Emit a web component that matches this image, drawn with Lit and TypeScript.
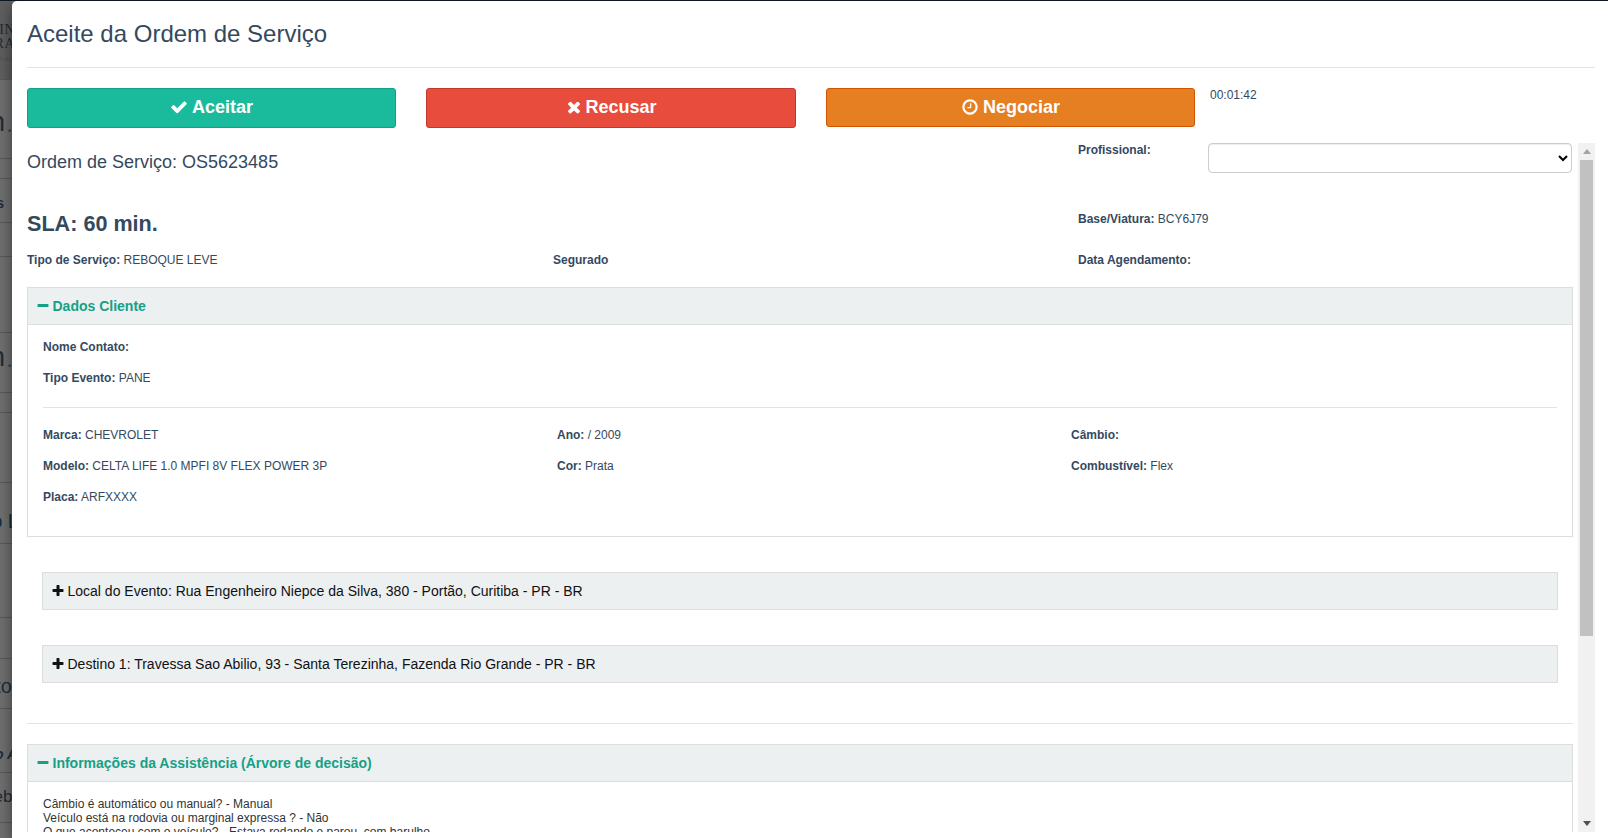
import { LitElement, html, css, svg } from "lit";
import { customElement } from "lit/decorators.js";

const ICONS: Record<string, string> = {
  check: "M1671 566q0 40-28 68l-724 724-136 136q-28 28-68 28t-68-28l-136-136-362-362q-28-28-28-68t28-68l136-136q28-28 68-28t68 28l294 295 656-657q28-28 68-28t68 28l136 136q28 28 28 68z",
  times: "M1490 1322q0 40-28 68l-136 136q-28 28-68 28t-68-28l-294-294-294 294q-28 28-68 28t-68-28l-136-136q-28-28-28-68t28-68l294-294-294-294q-28-28-28-68t28-68l136-136q28-28 68-28t68 28l294 294 294-294q28-28 68-28t68 28l136 136q28 28 28 68t-28 68l-294 294 294 294q28 28 28 68z",
  clock: "M1024 544v448q0 14-9 23t-23 9h-320q-14 0-23-9t-9-23v-64q0-14 9-23t23-9h224v-352q0-14 9-23t23-9h64q14 0 23 9t9 23zm416 352q0-148-73-273t-198-198-273-73-273 73-198 198-73 273 73 273 198 198 273 73 273-73 198-198 73-273zm224 0q0 209-103 385.5t-279.5 279.5-385.5 103-385.5-103-279.5-279.5-103-385.5 103-385.5 279.5-279.5 385.5-103 385.5 103 279.5 279.5 103 385.5z",
  plus: "M1600 736v192q0 40-28 68t-68 28h-416v416q0 40-28 68t-68 28h-192q-40 0-68-28t-28-68v-416h-416q-40 0-68-28t-28-68v-192q0-40 28-68t68-28h416v-416q0-40 28-68t68-28h192q40 0 68 28t28 68v416h416q40 0 68 28t28 68z",
  minus: "M1600 736v192q0 40-28 68t-68 28h-1216q-40 0-68-28t-28-68v-192q0-40 28-68t68-28h1216q40 0 68 28t28 68z",
};

const icon = (name: string, size: number) =>
  html`<svg class="ic" width=${size} height=${size} viewBox="0 0 1792 1792" fill="currentColor">${svg`<path d=${ICONS[name]}></path>`}</svg>`;

const LINES = [79, 158, 178, 222, 256, 332, 392, 412, 482, 543, 617, 658, 708, 772, 822];
/* Page text showing through behind the dialog; x is where the fragment's right edge falls. */
const FRAGS: { t: string; x: number; y: number; cls: string }[] = [
  { t: "LIN", x: 15, y: 23, cls: "serif" },
  { t: "TRA", x: 15, y: 37, cls: "serif" },
  { t: "TIAN", x: 14, y: 57, cls: "tiny" },
  { t: "n", x: 5, y: 109, cls: "big" },
  { t: ".", x: 13, y: 112, cls: "dot" },
  { t: "s", x: 4, y: 196, cls: "small" },
  { t: "n", x: 5, y: 344, cls: "big" },
  { t: ".", x: 13, y: 347, cls: "dot" },
  { t: "o L", x: 19, y: 511, cls: "mid" },
  { t: "to", x: 12, y: 676, cls: "mid" },
  { t: "o A", x: 17, y: 747, cls: "midb" },
  { t: "eb", x: 12.5, y: 788, cls: "web" },
];

@customElement("app-root")
export class AppRoot extends LitElement {
  static styles = css`
    :host {
      display: block;
      position: relative;
      width: 1608px;
      height: 838px;
      overflow: hidden;
      background: #707070;
      font-family: "Liberation Sans", Arial, sans-serif;
      font-size: 12px;
      color: #34495e;
    }
    .topstrip { position: absolute; inset: 0 0 auto 0; height: 1px; background: #101820; }
    .brandband { position: absolute; left: 0; top: 1px; width: 12px; height: 78px; background: #5f5f5f; }
    .bline { position: absolute; left: 0; width: 12px; height: 1px; background: #5a5a5a; }
    .frag { position: absolute; white-space: nowrap; color: #1f2d38; line-height: 1; }
    .serif { font-family: "Liberation Serif", serif; font-size: 14px; line-height: 13px; letter-spacing: 0.5px; color: #222a30; }
    .tiny { font-size: 5px; color: #4a4a4a; letter-spacing: 1px; }
    .big { font-size: 27px; }
    .dot { font-size: 24px; color: #3a4650; }
    .small { font-size: 14px; font-weight: 700; }
    .mid { font-size: 20px; }
    .web { font-size: 17px; }
    .midb { font-size: 14px; font-weight: 700; font-style: italic; }

    .modal {
      position: absolute;
      left: 12px; right: 0; top: 1px; bottom: 0;
      background: #fff;
      border-top-left-radius: 5px;
      box-shadow: 0 5px 15px rgba(0, 0, 0, 0.5);
      padding: 0 13px 0 15px;
      display: flex;
      flex-direction: column;
    }
    h1 {
      margin: 19px 0 0;
      font-size: 24px;
      font-weight: 400;
      line-height: 27px;
      color: #34495e;
    }
    .rule { height: 1px; background: #e2e2e2; border: 0; margin: 0; flex: none; }
    .rule.top { margin-top: 20px; }
    .actions { display: flex; align-items: flex-start; gap: 30px; margin: 20px 0 0 -1px; height: 55px; flex: none; }
    .btn {
      width: 370px;
      height: 40px;
      box-sizing: border-box;
      display: flex;
      align-items: center;
      justify-content: center;
      gap: 4px;
      border: 1px solid;
      border-radius: 3px;
      color: #fff;
      font: 700 18px "Liberation Sans", Arial, sans-serif;
      padding: 0 0 2px;
    }
    .ok { background: #1abb9c; border-color: #169f85; width: 369px; margin-left: 1px; }
    .no { background: #e74c3c; border-color: #c0392b; gap: 2px; }
    .neg { background: #e67e22; border-color: #d35400; width: 369px; height: 39px; padding-bottom: 1px; }
    .timer { margin-left: -15px; line-height: 14px; color: #34495e; }
    .scrollbox { flex: none; height: 689px; display: flex; }
    .viewport { flex: 1; min-width: 0; overflow: hidden; }
    .sbar { flex: none; width: 17px; background: #f1f1f1; display: flex; flex-direction: column; align-items: center; }
    .sbtn { flex: none; height: 17px; width: 17px; display: flex; align-items: center; justify-content: center; }
    .tri { width: 0; height: 0; border-left: 4.5px solid transparent; border-right: 4.5px solid transparent; }
    .tri.up { border-bottom: 5px solid #a3a3a3; }
    .tri.down { border-top: 5px solid #505050; }
    .thumb { flex: none; width: 13px; height: 476px; background: #c1c1c1; }
    .strack { flex: 1; }
    .content { width: 1546px; }
    .grid { display: grid; grid-template-columns: 526px 525px 1fr; width: 1551px; }
    .os { grid-column: 1 / 3; font-size: 18px; line-height: 20px; padding-top: 9px; }
    .prof { display: flex; align-items: flex-start; }
    .prof b { width: 130px; line-height: 14px; flex: none; }
    select {
      width: 364px;
      height: 30px;
      box-sizing: border-box;
      background: #fff;
      border: 1px solid #ccc;
      border-radius: 4px;
      box-shadow: inset 0 1px 1px rgba(0, 0, 0, 0.075);
      padding: 0;
      margin: 0;
    }
    .sla { grid-column: 1 / 3; font-size: 21.6px; font-weight: 700; line-height: 26px; margin-top: 38px; }
    .base { line-height: 14px; margin-top: 39px; }
    .info { height: 17px; line-height: 17px; margin-top: 15px; }
    .panel { border: 1px solid #dddddd; box-sizing: border-box; }
    .p1 { margin-top: 18px; height: 250px; }
    .p2 { margin-top: 20px; height: 347px; }
    .phead {
      height: 37px;
      box-sizing: border-box;
      background: #ecf0f1;
      border-bottom: 1px solid #dddddd;
      padding-left: 8px;
      display: flex;
      align-items: center;
      gap: 2.5px;
      color: #16a085;
      font-size: 14px;
      font-weight: 700;
    }
    .pbody { padding: 14px 15px 0; }
    .line { height: 17px; line-height: 17px; margin-bottom: 14px; white-space: nowrap; }
    .inrule { height: 1px; background: #e2e2e2; margin: 20px 0 19px; }
    .cols { display: grid; grid-template-columns: 514px 514px 1fr; }
    .bar {
      margin: 35px 15px 0;
      height: 38px;
      box-sizing: border-box;
      background: #ecf0f1;
      border: 1px solid #dddddd;
      padding-left: 8px;
      display: flex;
      align-items: center;
      gap: 2.5px;
      color: #111;
      font-size: 14px;
      white-space: nowrap;
    }
    .rule.mid2 { margin-top: 40px; }
    .text { padding: 15px 15px 0; line-height: 14px; color: #333; }
    .ic { flex: none; display: block; }
  `;

  render() {
    return html`
      <div class="topstrip"></div>
      <div class="brandband"></div>
      ${LINES.map((y) => html`<div class="bline" style="top:${y}px"></div>`)}
      ${FRAGS.map((f) => html`<div class="frag ${f.cls}" style="top:${f.y}px;right:${1608 - f.x}px">${f.t}</div>`)}
      <div class="modal">
        <h1>Aceite da Ordem de Serviço</h1>
        <hr class="rule top" />
        <div class="actions">
          <div class="btn ok">${icon("check", 18)}Aceitar</div>
          <div class="btn no">${icon("times", 18)}Recusar</div>
          <div class="btn neg">${icon("clock", 18)}Negociar</div>
          <div class="timer">00:01:42</div>
        </div>
        <div class="scrollbox">
          <div class="viewport">
            <div class="content">
              <div class="grid">
                <div class="os">Ordem de Serviço: OS5623485</div>
                <div class="prof"><b>Profissional:</b><select></select></div>
                <div class="sla">SLA: 60 min.</div>
                <div class="base"><b>Base/Viatura:</b> BCY6J79</div>
                <div class="info"><b>Tipo de Serviço:</b> REBOQUE LEVE</div>
                <div class="info"><b>Segurado</b></div>
                <div class="info"><b>Data Agendamento:</b></div>
              </div>
              <div class="panel p1">
                <div class="phead">${icon("minus", 14)}Dados Cliente</div>
                <div class="pbody">
                  <div class="line"><b>Nome Contato:</b></div>
                  <div class="line"><b>Tipo Evento:</b> PANE</div>
                  <div class="inrule"></div>
                  <div class="cols">
                    <div class="line"><b>Marca:</b> CHEVROLET</div>
                    <div class="line"><b>Ano:</b> / 2009</div>
                    <div class="line"><b>Câmbio:</b></div>
                    <div class="line"><b>Modelo:</b> CELTA LIFE 1.0 MPFI 8V FLEX POWER 3P</div>
                    <div class="line"><b>Cor:</b> Prata</div>
                    <div class="line"><b>Combustível:</b> Flex</div>
                    <div class="line"><b>Placa:</b> ARFXXXX</div>
                  </div>
                </div>
              </div>
              <div class="bar">${icon("plus", 14)}Local do Evento: Rua Engenheiro Niepce da Silva, 380 - Portão, Curitiba - PR - BR</div>
              <div class="bar">${icon("plus", 14)}Destino 1: Travessa Sao Abilio, 93 - Santa Terezinha, Fazenda Rio Grande - PR - BR</div>
              <hr class="rule mid2" />
              <div class="panel p2">
                <div class="phead">${icon("minus", 14)}Informações da Assistência (Árvore de decisão)</div>
                <div class="text">
                  Câmbio é automático ou manual? - Manual<br />
                  Veículo está na rodovia ou marginal expressa ? - Não<br />
                  O que aconteceu com o veículo? - Estava rodando e parou, com barulho
                </div>
              </div>
            </div>
          </div>
          <div class="sbar">
            <div class="sbtn"><div class="tri up"></div></div>
            <div class="thumb"></div>
            <div class="strack"></div>
            <div class="sbtn"><div class="tri down"></div></div>
          </div>
        </div>
      </div>
    `;
  }
}
